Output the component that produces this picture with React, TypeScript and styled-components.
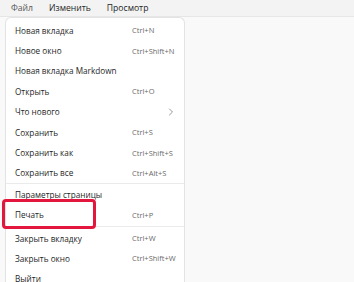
import React from 'react';
import styled, { createGlobalStyle } from 'styled-components';

const GlobalStyle = createGlobalStyle`
  html, body {
    margin: 0;
    padding: 0;
    background: #f9f9f9;
  }
  body {
    font-family: "Open Sans", "Noto Sans", "Liberation Sans", sans-serif;
    color: #1b1b1b;
  }
`;

const Page = styled.div`
  width: 354px;
  height: 282px;
  overflow: hidden;
  background: #f9f9f9;
  display: flex;
  flex-direction: column;
`;

const MenuBar = styled.div`
  height: 16px;
  flex: none;
  display: flex;
  align-items: center;
  padding-left: 3px;
  background: #f3f3f3;
  border-bottom: 1px solid #e6e6e6;
`;

const MenuTitle = styled.div<{ $active?: boolean }>`
  padding: 0 8px;
  font-size: 8.6px;
  line-height: 16px;
  color: ${(p) => (p.$active ? '#5a5a5a' : '#262626')};
`;

const Body = styled.div`
  flex: 1;
  display: flex;
  padding-left: 5px;
`;

const Panel = styled.div`
  width: 178px;
  background: #ffffff;
  border: 1px solid #e3e3e3;
  border-bottom: none;
  border-radius: 6px 6px 0 0;
  padding-top: 2px;
  display: flex;
  flex-direction: column;
`;

const Row = styled.div`
  position: relative;
  height: 20.4px;
  flex: none;
  display: grid;
  grid-template-columns: 117px 1fr 16px;
  align-items: center;
  padding-left: 9px;
  font-size: 8.2px;
`;

const Label = styled.span`
  white-space: nowrap;
  color: #1f1f1f;
`;

const Shortcut = styled.span`
  font-size: 7.5px;
  color: #6a6a6a;
  white-space: nowrap;
`;

const Chevron = styled.span`
  display: flex;
  align-items: center;
  color: #8a8a8a;
`;

const Separator = styled.div<{ $space: number }>`
  height: 1px;
  flex: none;
  margin: ${(p) => p.$space}px 0;
  background: #ebebeb;
`;

const Highlight = styled.div`
  position: absolute;
  left: -4px;
  top: -6px;
  width: 88px;
  height: 24px;
  border: 3px solid #e3173e;
  border-radius: 4px;
  pointer-events: none;
`;

type Item = {
  label: string;
  shortcut?: string;
  submenu?: boolean;
  marked?: boolean;
};

const groups: Item[][] = [
  [
    { label: 'Новая вкладка', shortcut: 'Ctrl+N' },
    { label: 'Новое окно', shortcut: 'Ctrl+Shift+N' },
    { label: 'Новая вкладка Markdown' },
    { label: 'Открыть', shortcut: 'Ctrl+O' },
    { label: 'Что нового', submenu: true },
    { label: 'Сохранить', shortcut: 'Ctrl+S' },
    { label: 'Сохранить как', shortcut: 'Ctrl+Shift+S' },
    { label: 'Сохранить все', shortcut: 'Ctrl+Alt+S' },
  ],
  [
    { label: 'Параметры страницы' },
    { label: 'Печать', shortcut: 'Ctrl+P', marked: true },
  ],
  [
    { label: 'Закрыть вкладку', shortcut: 'Ctrl+W' },
    { label: 'Закрыть окно', shortcut: 'Ctrl+Shift+W' },
    { label: 'Выйти' },
  ],
];

function ChevronRight() {
  return (
    <svg width="6" height="8" viewBox="0 0 6 8" fill="none">
      <path d="M1.5 1 L4.5 4 L1.5 7" stroke="currentColor" strokeWidth="0.9" strokeLinecap="round" strokeLinejoin="round" />
    </svg>
  );
}

export default function App() {
  return (
    <Page>
      <GlobalStyle />
      <MenuBar>
        <MenuTitle $active>Файл</MenuTitle>
        <MenuTitle>Изменить</MenuTitle>
        <MenuTitle>Просмотр</MenuTitle>
      </MenuBar>
      <Body>
        <Panel>
          {groups.map((group, gi) => (
            <React.Fragment key={gi}>
              {gi > 0 && <Separator $space={gi === 1 ? 0 : 1} />}
              {group.map((item) => (
                <Row key={item.label}>
                  <Label>{item.label}</Label>
                  <Shortcut>{item.shortcut}</Shortcut>
                  <Chevron>{item.submenu && <ChevronRight />}</Chevron>
                  {item.marked && <Highlight />}
                </Row>
              ))}
            </React.Fragment>
          ))}
        </Panel>
      </Body>
    </Page>
  );
}
